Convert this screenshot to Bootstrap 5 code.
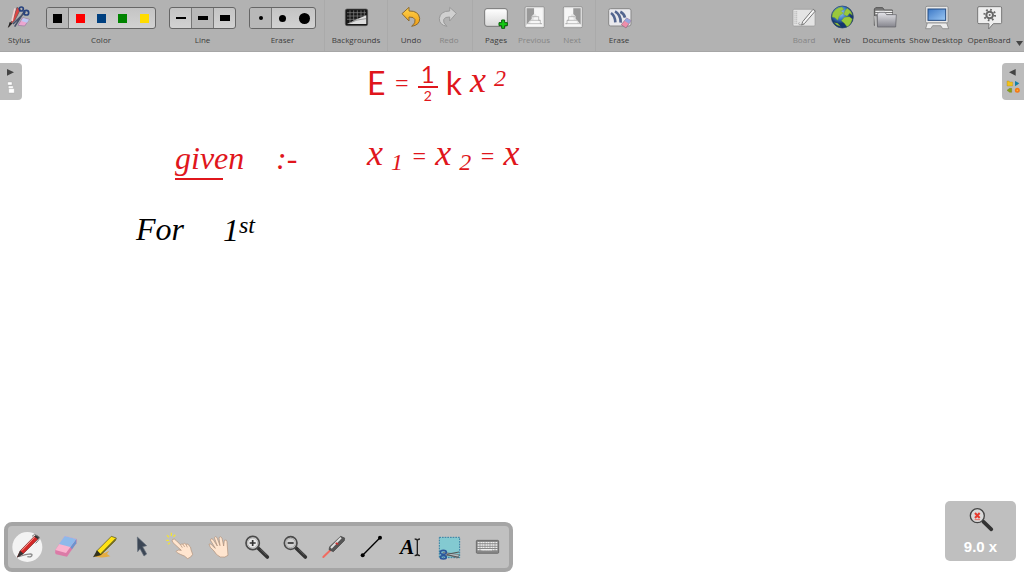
<!DOCTYPE html>
<html lang="en">
<head>
<meta charset="utf-8">
<meta name="viewport" content="width=device-width, initial-scale=1">
<title>OpenBoard</title>
<link rel="stylesheet" href="https://cdn.jsdelivr.net/npm/bootstrap@5.3.0/dist/css/bootstrap.min.css">
<style>
body{font-family:"Open Sans","Noto Sans",sans-serif;background:#fff}
.topbar{height:52px;background:#b2b2b2;border-bottom:1px solid #a6a6a6;font-size:8px;line-height:10px;color:#3c3c3c}
.tool{align-self:flex-start;width:38px;padding:5px 0 0;border:0;background:none;color:inherit;text-align:center;white-space:nowrap}
.tool svg{display:block;width:28px;height:26px;margin:0 auto 4px}
.tool:disabled{color:#858585}
.tool-bg{width:54px}.tool-docs{width:46px}.tool-desk{width:58px}.tool-app{width:48px}
.picker-row{margin-right:13px}
.caption{margin-top:6px;text-align:center}
.divider{width:1px;margin:0 4px;background:#aaa}
.choices{width:67px;height:22px;margin-top:7px;border:1px solid #666;border-radius:3px;background:linear-gradient(#c4c4c4,#d2d2d2);overflow:hidden}
.choices-5{width:110px}
.choices button{flex:1 1 0;height:20px;padding:0;border:0;background:none;display:flex;align-items:center;justify-content:center}
.choices button.on{background:#b8b8b8}
.choices button.rule-r{border-right:1px solid #777}
.swatch{width:9px;height:9px}
.dot{border-radius:50%;background:#000}
.caret{align-self:flex-start;width:11px;padding:41px 0 0 1px;border:0;background:none;line-height:0}
.side-tab{top:11px;width:22px;height:37px;border:0;padding:0;background:#bcbcbc}
.side-tab svg{display:block;width:22px;height:37px}
.tab-left{left:0;border-radius:0 4px 4px 0}
.tab-right{right:0;border-radius:4px 0 0 4px}
.ink{position:absolute;display:flex;align-items:center;margin:0;white-space:nowrap;font-family:"Liberation Serif",serif;font-style:italic;font-size:32px;line-height:32px;font-weight:400}
.ink-red{color:#e0161c}
.ink sub,.ink sup{position:static;font-size:24px;line-height:24px;vertical-align:baseline}
.ink sub{margin-top:12px}
.ink sup{margin-bottom:10px}
.equation{gap:8px}
.equals{font-size:24px}
.variable{font-size:36px;margin-bottom:6px}
.sans{font-family:Lato,sans-serif;font-style:normal}
.frac{display:flex;flex-direction:column;width:20px;text-align:center;font-family:Lato,sans-serif;font-style:normal}
.frac span:first-child{border-bottom:2px solid;font-size:24px;line-height:24px}
.frac span:last-child{font-size:14px;line-height:16px}
.underlined{padding-bottom:6px;background:linear-gradient(#e0161c,#e0161c) left bottom/48px 2px no-repeat}
.palette{left:4px;bottom:4px;width:509px;max-width:99%;height:50px;border:4px solid #a5a5a5;border-radius:8px;background:#c0c0c0;padding:0 3px 0 0}
.palette button{flex:1 1 0;height:42px;padding:0;border:0;background:none}
.palette svg{display:block;width:32px;height:32px;margin:0 auto}
.zoom-box{right:8px;bottom:15px;width:71px;height:60px;border-radius:5px;background:#bfbfbf;color:#fff;font:700 15px/16px "Liberation Sans",sans-serif;text-align:center;padding:0 0 2px;border:0}
.zoom-box svg{display:block;width:28px;height:28px;margin:0 auto 6px}
</style>
</head>
<body>
<svg width="0" height="0" class="position-absolute" aria-hidden="true">
<defs>
<linearGradient id="gold" x2="0" y2="1"><stop stop-color="#ffd34d"/><stop offset="1" stop-color="#ef9b10"/></linearGradient>
<linearGradient id="paper" x2="0" y2="1"><stop stop-color="#fff"/><stop offset="1" stop-color="#d8d8d8"/></linearGradient>
<linearGradient id="screen" x2="1" y2="1"><stop stop-color="#3c78c6"/><stop offset="1" stop-color="#9cc8f4"/></linearGradient>
<radialGradient id="globe" cx=".4" cy=".3"><stop stop-color="#a8d0f8"/><stop offset=".6" stop-color="#3d7cc8"/><stop offset="1" stop-color="#16366e"/></radialGradient>
<linearGradient id="folder" x2="0" y2="1"><stop stop-color="#e6e6ea"/><stop offset="1" stop-color="#85858d"/></linearGradient>
</defs>
</svg>
<div class="d-flex flex-column min-vh-100">
<header class="topbar d-flex justify-content-between">
<div class="d-flex">
<button class="tool me-2" type="button"><svg viewBox="15 15 84 78"><path d="M51 22l-12 34-14 26 20-22 16-31z" fill="#d44" stroke="#555" stroke-width="2"/><path d="M45 25l-9 38" stroke="#f6d0d0" stroke-width="5"/><path d="M24 83l5-17 8 4z" fill="#222"/><path d="M75 31L44 80M76 36L39 72" stroke="#46506a" stroke-width="5"/><circle cx="64" cy="27" r="6" fill="none" stroke="#27427e" stroke-width="5"/><circle cx="79" cy="38" r="7" fill="none" stroke="#27427e" stroke-width="5"/><path d="M68 53l20 5-14 20-20-2z" fill="#eba6d0" stroke="#967ba0" stroke-width="2"/><path d="M70 54l17 5-6 9-17-5z" fill="#bbcaf5"/></svg>Stylus</button>
<div class="picker-row">
<div class="choices choices-5 d-flex" role="group" aria-label="Color"><button type="button" class="on rule-r" aria-label="Black"><span class="swatch" style="background:#000"></span></button><button type="button" aria-label="Red"><span class="swatch" style="background:#f00"></span></button><button type="button" aria-label="Blue"><span class="swatch" style="background:#004080"></span></button><button type="button" aria-label="Green"><span class="swatch" style="background:#008400"></span></button><button type="button" aria-label="Yellow"><span class="swatch" style="background:#ffdc00"></span></button></div>
<div class="caption">Color</div>
</div>
<div class="picker-row">
<div class="choices d-flex" role="group" aria-label="Line"><button type="button" class="rule-r" aria-label="Thin"><svg width="10" height="2"><path d="M0 0h10v2H0z"/></svg></button><button type="button" class="on rule-r" aria-label="Medium"><svg width="10" height="4"><path d="M0 0h10v4H0z"/></svg></button><button type="button" aria-label="Thick"><svg width="10" height="6"><path d="M0 0h10v6H0z"/></svg></button></div>
<div class="caption">Line</div>
</div>
<div class="me-1">
<div class="choices d-flex" role="group" aria-label="Eraser"><button type="button" class="on rule-r" aria-label="Small"><span class="dot" style="width:4px;height:4px"></span></button><button type="button" aria-label="Medium"><span class="dot" style="width:7px;height:7px"></span></button><button type="button" aria-label="Large"><span class="dot" style="width:11px;height:11px"></span></button></div>
<div class="caption">Eraser</div>
</div>
<div class="divider"></div>
<button class="tool tool-bg" type="button"><svg viewBox="54 15 84 78"><rect x="64" y="27" width="67" height="50" rx="5" fill="#181818" stroke="#555" stroke-width="2"/><path d="M69 38h57M69 48h57M69 58h40M78 31v38M89 31v34M100 31v28M111 31v22M121 31v18" stroke="#888" stroke-width="2"/><path d="M69 72l31-15 27-11v26z" fill="#ddd"/><path d="M73 71q25-14 53-15" stroke="#777" fill="none" stroke-width="2"/></svg>Backgrounds</button>
<div class="divider"></div>
<button class="tool" type="button"><svg viewBox="216 15 84 78"><path d="M231 41l21-19v11q29-1 32 22 1 20-24 24 13-11 10-20-3-9-18-8v12z" fill="url(#gold)" stroke="#8c6a30" stroke-width="3" stroke-linejoin="round"/></svg>Undo</button>
<button class="tool" type="button" disabled><svg viewBox="333 15 84 78"><path d="M397 40l-20-18v11q-28 0-31 22-1 20 23 24-13-11-10-20 3-9 18-8v12z" fill="#d0d0d0" stroke="#999" stroke-width="3" stroke-linejoin="round"/></svg>Redo</button>
<div class="divider"></div>
<button class="tool" type="button"><svg viewBox="24 15 84 78"><rect x="32" y="26" width="68" height="53" rx="7" fill="url(#paper)" stroke="#777" stroke-width="3"/><path d="M83 60h9v8h8v9h-8v8h-9v-8h-8v-9h8z" fill="#14c814" stroke="#075d07" stroke-width="3"/></svg>Pages</button>
<button class="tool" type="button" disabled><svg viewBox="138 15 84 78"><rect x="153" y="20" width="58" height="63" rx="4" fill="#e4e4e4" stroke="#858585" stroke-width="2"/><path d="M158 25h22v17l-7 7v7l-6 6-9 12z" fill="#999"/><path d="M181 25h25v54h-50l4-8h8l3-10h7l3-10h8l-3-8h-5z" fill="#f6f6f6"/><path d="M174 50h20M168 61h31M160 71h43M194 50v11h5v10h5" fill="none" stroke="#a5a5a5" stroke-width="2"/></svg>Previous</button>
<button class="tool" type="button" disabled><svg viewBox="252 15 84 78"><rect x="268" y="20" width="57" height="63" rx="4" fill="#e4e4e4" stroke="#858585" stroke-width="2"/><path d="M320 25h-22v17l7 7v7l6 6 9 12z" fill="#999"/><path d="M297 25h-25v54h50l-4-8h-8l-3-10h-7l-3-10h-8l3-8h5z" fill="#f6f6f6"/><path d="M304 50h-20M310 61h-31M318 71h-43M284 50v11h-5v10h-5" fill="none" stroke="#a5a5a5" stroke-width="2"/></svg>Next</button>
<div class="divider"></div>
<button class="tool" type="button"><svg viewBox="393 15 84 78"><rect x="404" y="26" width="67" height="52" rx="6" fill="#e9e9ed" stroke="#888" stroke-width="3"/><path d="M411 39q12 8 13 28M423 34q18 10 17 34M439 35q11 5 14 18" fill="none" stroke="#53658f" stroke-width="8"/><path d="M458 54l13 8-15 22-14-10z" fill="#ee8eaa" stroke="#8c6480" stroke-width="2"/><path d="M458 54l13 8-6 9-14-9z" fill="#95a6dc"/></svg>Erase</button>
</div>
<div class="d-flex">
<button class="tool" type="button" disabled><svg viewBox="30 15 84 78"><rect x="39" y="28" width="66" height="50" rx="3" fill="#e4e4e4" stroke="#999" stroke-width="2"/><path d="M45 34v38M50 34v38" stroke="#aaa" stroke-width="3" stroke-dasharray="3 3"/><path d="M99 28l7 5-33 38-8 4 3-10z" fill="#f7f7f7" stroke="#777" stroke-width="3"/><path d="M58 67q-8 11 15 6" fill="none" stroke="#888" stroke-width="2"/></svg>Board</button>
<button class="tool" type="button"><svg viewBox="144 15 84 78"><circle cx="187" cy="51" r="33" fill="url(#globe)" stroke="#234068" stroke-width="2"/><path d="M158 40q8-16 27-19l7 7-10 5 8 6-12 9-5 13-8-8-9-2zM202 25q13 8 15 21l-8-6-8 9-10-6 5-13zM193 52l15-2 9 7q-5 19-16 23l-8-10-9-8zM163 68l10 2 8 9q-11-2-18-11z" fill="#9ac83c" stroke="#648e2c"/></svg>Web</button>
<button class="tool tool-docs" type="button"><svg viewBox="270 15 84 78"><path d="M283 76V27l4-4h21l5 7h24v46z" fill="#777" stroke="#555" stroke-width="3"/><path d="M286 34h51M286 41h51" stroke="#eee" stroke-width="4"/><path d="M292 81V42l5-5h18l5 7h29l-2 37z" fill="url(#folder)" stroke="#5e5e64" stroke-width="2"/><path d="M282 48l8 1 1 33h-6z" fill="#bbb"/></svg>Documents</button>
<button class="tool tool-desk" type="button"><svg viewBox="66 15 84 78"><rect x="77" y="19" width="67" height="50" rx="4" fill="#e9e9e9" stroke="#777" stroke-width="2"/><rect x="84" y="27" width="53" height="34" fill="url(#screen)" stroke="#234a80" stroke-width="3"/><path d="M82 69h58l6 17h-18l-6-9h-24l-6 9H77z" fill="#ececec" stroke="#777" stroke-width="2"/></svg>Show Desktop</button>
<button class="tool tool-app" type="button"><svg viewBox="225 15 84 78"><path d="M237 20h64q4 0 4 4v43q0 4-4 4h-21l-14 16 1-16h-30q-4 0-4-4V24q0-4 4-4z" fill="#eee" stroke="#777" stroke-width="3"/><circle cx="269" cy="45" r="10" fill="none" stroke="#666" stroke-width="6"/><circle cx="269" cy="45" r="16" fill="none" stroke="#666" stroke-width="6" stroke-dasharray="5 7.5"/><circle cx="269" cy="45" r="3" fill="#666"/></svg>OpenBoard</button>
<button class="caret" type="button" aria-label="More"><svg width="7" height="5"><path d="M0 0h7L3.500 5z" fill="#444"/></svg></button>
</div>
</header>
<main class="flex-grow-1 position-relative">
<button class="side-tab tab-left position-absolute" type="button" aria-label="Open page panel"><svg viewBox="0 189 66 111"><path d="M21 207l21 10-21 10z" fill="#444"/><path d="M23 246h13v9H23zM25 258h15v8H25zM26 265h17v14H26z" fill="#fff" stroke="#999"/></svg></button>
<button class="side-tab tab-right position-absolute" type="button" aria-label="Open library panel"><svg viewBox="306 189 66 111"><path d="M347 207v20l-20-10z" fill="#444"/><path d="M321 243h6l2 3h9v12h-17z" fill="#f2c21c" stroke="#a6821c"/><path d="M345 243l13 7-13 9z" fill="#1581a8"/><path d="M321 271l8-6h6v12h-6z" fill="#8ba014" stroke="#66750d"/><circle cx="352" cy="271" r="5" fill="#ffbd35" stroke="#f47a18" stroke-width="5"/></svg></button>
<p class="ink ink-red equation" style="left:367px;top:10px"><span class="sans">E</span><span class="equals">=</span><span class="frac"><span>1</span><span>2</span></span><span class="sans">k</span><span class="variable">x</span><sup>2</sup></p>
<p class="ink ink-red underlined" style="left:175px;top:90px">given</p>
<p class="ink ink-red" style="left:276px;top:90px">:-</p>
<p class="ink ink-red equation" style="left:367px;top:85px"><span class="variable">x</span><sub>1</sub><span class="equals">=</span><span class="variable">x</span><sub>2</sub><span class="equals">=</span><span class="variable">x</span></p>
<p class="ink text-black" style="left:136px;top:161px">For</p>
<p class="ink text-black" style="left:223px;top:161px">1<sup>st</sup></p>
<div class="palette position-absolute d-flex" role="toolbar" aria-label="Drawing tools">
<button type="button" aria-label="Pen"><svg viewBox="36 48 96 96"><circle cx="85" cy="96" r="45" fill="#f3f3f3"/><path d="M59 125q41-13 40-5 0 7-14 5" fill="none" stroke="#888" stroke-width="4"/><path d="M108 62l11 8-45 45-19 11 9-19z" fill="#d22828" stroke="#722" stroke-width="2"/><path d="M107 66L68 107" stroke="#ff9a8f" stroke-width="3"/><path d="M54 128l9-21 11 9zM111 59l10 7-4 7-11-8z" fill="#343434"/><path d="M99 64l8-6 14 8q2 7-11 19" fill="none" stroke="#777" stroke-width="3"/></svg></button>
<button type="button" aria-label="Eraser"><svg viewBox="150 48 96 96"><path d="M197 63l35 9q2 2 0 13l-28 40-33-7q-4-3-2-13z" fill="#db7ba7"/><path d="M197 63l35 9-31 42-32-9z" fill="#f9b3ce"/><path d="M232 72v13l-13 18-5-7z" fill="#6c94ce"/><path d="M197 63l35 9-18 24-34-9z" fill="#8eb9ea"/></svg></button>
<button type="button" aria-label="Highlighter"><svg viewBox="267 48 96 96"><path d="M286 125l15-14 16 3 14-7-7 10 10 7q-21 6-48 1z" fill="#e5ad42"/><path d="M337 64l15 5-3 8-43 42-14 4 2-16z" fill="#ffe314" stroke="#49451c" stroke-width="2"/><path d="M350 72l-44 45" stroke="#6d6722" stroke-width="4"/><path d="M282 127l12-21 13 13z" fill="#32321f"/></svg></button>
<button type="button" aria-label="Select"><svg viewBox="381 48 96 96"><path d="M415 66l28 26-12 3 12 22-8 6-12-22-7 9z" fill="#3c4655" stroke="#626c79" stroke-width="2"/></svg></button>
<button type="button" aria-label="Interact"><svg viewBox="0 48 96 96"><path d="M9 61l6 6M22 53v10M34 59l-6 6M6 76h9M12 88l6-5M31 80l4 4" stroke="#f0e23c" stroke-width="4"/><path d="M26 73q6-3 11 4l13 13q2-6 7-2 4-6 9 0 7-4 9 4 6 2 6 12l5 14q-4 9-15 13-8-9-22-13-12-5-13-9 6-6 16-3L27 83q-5-6-1-10z" fill="#ffe5cf" stroke="#ad8e77" stroke-width="2"/><path d="M50 90l5 8M57 88l5 8M66 88l4 9" stroke="#ad8e77" stroke-width="2"/></svg></button>
<button type="button" aria-label="Move"><svg viewBox="117 48 96 96"><path d="M135 87q5-4 13 8l6 5-15-25q1-7 8-2l13 20-9-25q4-6 8 0l9 24-3-24q5-6 9 1l5 24 2-17q7-4 8 4l3 41q-8 8-23 5-13-6-19-18-15-12-15-21z" fill="#ffe5cf" stroke="#ad8e77" stroke-width="2"/></svg></button>
<button type="button" aria-label="Zoom in"><svg viewBox="231 48 96 96"><path d="M282 99l28 27" stroke="#333" stroke-width="11" stroke-linecap="round"/><path d="M290 103l18 18" stroke="#777" stroke-width="2"/><circle cx="266" cy="84" r="20" fill="#e7e7e7" stroke="#4a4a4a" stroke-width="5"/><circle cx="266" cy="84" r="15" fill="none" stroke="#999" stroke-width="2"/><path d="M266 75v18M257 84h18" stroke="#333" stroke-width="5"/></svg></button>
<button type="button" aria-label="Zoom out"><svg viewBox="345 48 96 96"><path d="M396 99l28 27" stroke="#333" stroke-width="11" stroke-linecap="round"/><path d="M404 103l18 18" stroke="#777" stroke-width="2"/><circle cx="380" cy="84" r="19" fill="#d1d1d1" stroke="#4a4a4a" stroke-width="5"/><circle cx="380" cy="84" r="14" fill="none" stroke="#999" stroke-width="2"/><path d="M371 84h18" stroke="#333" stroke-width="5"/></svg></button>
<button type="button" aria-label="Laser pointer"><svg viewBox="-33 48 96 96"><path d="M-17 126L11 99" stroke="#f06b61" stroke-width="6" stroke-linecap="round"/><path d="M35 64l12 5-1 8-33 33-13-6 2-9z" fill="#555" stroke="#444" stroke-width="2"/><path d="M36 68L6 99" stroke="#e0e0e0" stroke-width="6"/><path d="M20 84l8 4" stroke="#c33" stroke-width="5"/></svg></button>
<button type="button" aria-label="Line"><svg viewBox="81 48 96 96"><path d="M101 121l52-53" stroke="#000" stroke-width="4"/><circle cx="101" cy="121" r="6"/><circle cx="153" cy="68" r="6"/></svg></button>
<button type="button" aria-label="Text"><svg viewBox="195 48 96 96"><text x="213" y="117" font-family="Liberation Serif, serif" font-size="64" font-weight="700" font-style="italic">A</text><path d="M257 72q7 0 8 5 1-5 8-5M265 76v42M257 122q7 0 8-5 1 5 8 5" stroke="#222" stroke-width="4" fill="none"/></svg></button>
<button type="button" aria-label="Capture"><svg viewBox="309 48 96 96"><rect x="328" y="67" width="61" height="61" fill="#83cad1" stroke="#347fa3" stroke-width="3" stroke-dasharray="5 3"/><path d="M339 112l49 7-6 10q-17-9-43-8z" fill="#b5bdc3" stroke="#666" stroke-width="2"/><path d="M350 119l37 8M350 118l37-7" stroke="#555" stroke-width="3"/><ellipse cx="340" cy="112" rx="9" ry="6" fill="none" stroke="#2b589b" stroke-width="5"/><ellipse cx="340" cy="127" rx="9" ry="5" fill="none" stroke="#2b589b" stroke-width="5"/></svg></button>
<button type="button" aria-label="Keyboard"><svg viewBox="423 48 96 96"><rect x="439" y="76" width="67" height="39" rx="3" fill="#888" stroke="#555" stroke-width="2"/><path d="M443 83h59M443 90h59M443 97h59M443 104h59" stroke="#eee" stroke-width="4" stroke-dasharray="4 1"/><path d="M455 104h31" stroke="#eee" stroke-width="4"/></svg></button>
</div>
<button class="zoom-box position-absolute" type="button"><svg viewBox="108 45 84 84"><path d="M157 95l24 23" stroke="#333" stroke-width="11" stroke-linecap="round"/><circle cx="139" cy="77" r="21" fill="#d9d9d9" stroke="#444" stroke-width="4"/><path d="M132 69l14 15M146 69l-14 15" stroke="#e83a2e" stroke-width="6"/><path d="M131 89h16" stroke="#e83a2e" stroke-width="2"/></svg>9.0 x</button>
</main>
</div>
<script src="https://cdn.jsdelivr.net/npm/bootstrap@5.3.0/dist/js/bootstrap.bundle.min.js"></script>
</body>
</html>
